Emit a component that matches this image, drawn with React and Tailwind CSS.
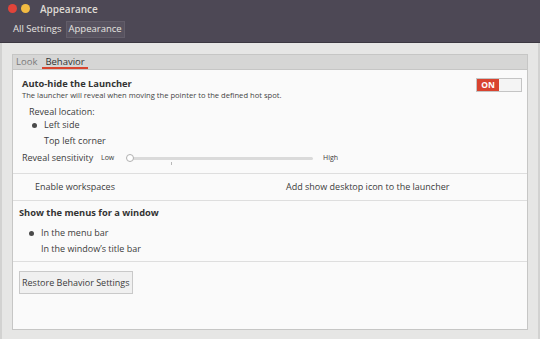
import React from 'react';

const font = { fontFamily: '"Open Sans", "DejaVu Sans", sans-serif' };

const Bullet = ({ on }) => (
  <span className="w-[10px] flex items-center justify-center">
    {on && <span className="w-[5px] h-[5px] rounded-full bg-[#4a4a4a]" />}
  </span>
);

export default function App() {
  return (
    <div className="w-[540px] h-[339px] overflow-hidden flex flex-col bg-[#e6e6e5] text-[#3c3c3c]" style={font}>
      {/* barra de título + toolbar */}
      <div className="h-[43px] bg-[#4d4855] border-b border-[#3b3741] flex flex-col">
        <div className="h-[17px] flex items-center pl-[8px] gap-[4px]">
          <span className="w-[9px] h-[9px] rounded-full bg-[#e0443a]" />
          <span className="w-[9px] h-[9px] rounded-full bg-[#f2bb42]" />
          <span className="ml-[6px] text-[10px] font-semibold text-[#dedad4] leading-none">Appearance</span>
        </div>
        <div className="flex items-center pl-[12px] gap-[3px] mt-[4px]">
          <span className="h-[17px] px-[1px] flex items-center text-[9.5px] text-[#e6e4e0]">All Settings</span>
          <span className="h-[17px] px-[2px] flex items-center text-[9.5px] text-[#e6e4e0] bg-[#57525f] border border-[#625d69]">Appearance</span>
        </div>
      </div>

      {/* cuerpo */}
      <div className="flex-1 flex flex-col pt-[11px] pb-[9px] pl-[10px] pr-[10px] border-l-[2px] border-r-[2px] border-[#d2d2d1]">
        <div className="flex-1 flex flex-col border border-[#c6c6c5]">
          {/* pestañas */}
          <div className="h-[15px] bg-[#d6d6d5] border-b border-[#c6c6c5] flex items-end pl-[2px]">
            <span className="h-[14px] px-[1px] text-[9.5px] text-[#7a7a7a] leading-[14px]">Look</span>
            <span className="ml-[4px] h-[14px] px-[3px] text-[9.5px] text-[#333] leading-[13px] border-b-[2px] border-[#d9452e]">Behavior</span>
          </div>

          <div className="flex-1 bg-[#fafafa] flex flex-col text-[9px]">
            {/* auto-hide */}
            <div className="flex flex-col pl-[9px] pr-[5px]">
              <div className="flex justify-between items-start mt-[8px]">
                <div className="flex flex-col">
                  <span className="h-[12px] leading-[12px] text-[9.3px] font-bold text-[#333]">Auto-hide the Launcher</span>
                  <span className="h-[10px] leading-[10px] text-[7.6px] text-[#444]">The launcher will reveal when moving the pointer to the defined hot spot.</span>
                </div>
                <div className="w-[46px] h-[14px] border border-[#c4c4c4] bg-[#f4f4f4] flex">
                  <span className="w-[22px] h-full bg-[#d8432f] text-white text-[8.5px] font-bold flex items-center justify-center leading-none">ON</span>
                </div>
              </div>
              <span className="mt-[7px] ml-[7px] h-[10px] leading-[10px]">Reveal location:</span>
              <div className="mt-[3px] ml-[7px] h-[10px] flex items-center gap-[5px]">
                <Bullet on />
                <span className="leading-[10px]">Left side</span>
              </div>
              <div className="mt-[6px] ml-[7px] h-[10px] flex items-center gap-[5px]">
                <Bullet />
                <span className="leading-[10px]">Top left corner</span>
              </div>
              <div className="mt-[6px] h-[12px] flex items-center">
                <span className="w-[79px] shrink-0">Reveal sensitivity</span>
                <span className="w-[24px] shrink-0 text-[7px]">Low</span>
                <div className="relative w-[190px] shrink-0 h-[12px] flex items-center">
                  <div className="ml-[5px] w-[183px] h-[3px] rounded-full bg-[#dadada]" />
                  <span className="absolute left-[1px] top-[2px] w-[8px] h-[8px] rounded-full bg-white border border-[#b0b0b0]" />
                  <span className="absolute left-[46px] top-[10px] w-px h-[3px] bg-[#b8b8b8]" />
                </div>
                <span className="ml-[8px] text-[7px]">High</span>
              </div>
            </div>

            <div className="mt-[9px] border-t border-[#dedede]" />
            <div className="h-[26px] flex items-center pl-[22px]">
              <span className="w-[251px]">Enable workspaces</span>
              <span>Add show desktop icon to the launcher</span>
            </div>
            <div className="border-t border-[#dedede]" />

            {/* menús */}
            <div className="flex flex-col pl-[6px]">
              <span className="mt-[6px] h-[12px] leading-[12px] text-[9.3px] font-bold text-[#333]">Show the menus for a window</span>
              <div className="mt-[9px] ml-[7px] h-[10px] flex items-center gap-[5px]">
                <Bullet on />
                <span className="leading-[10px]">In the menu bar</span>
              </div>
              <div className="mt-[6px] ml-[7px] h-[10px] flex items-center gap-[5px]">
                <Bullet />
                <span className="leading-[10px]">In the window’s title bar</span>
              </div>
            </div>
            <div className="mt-[7px] border-t border-[#dedede]" />

            <div className="pl-[6px] mt-[9px]">
              <button className="h-[23px] px-[2px] border border-[#c9c9c9] bg-[#f0f0f0] text-[9px] text-[#3c3c3c]">
                Restore Behavior Settings
              </button>
            </div>
          </div>
        </div>
      </div>
    </div>
  );
}
